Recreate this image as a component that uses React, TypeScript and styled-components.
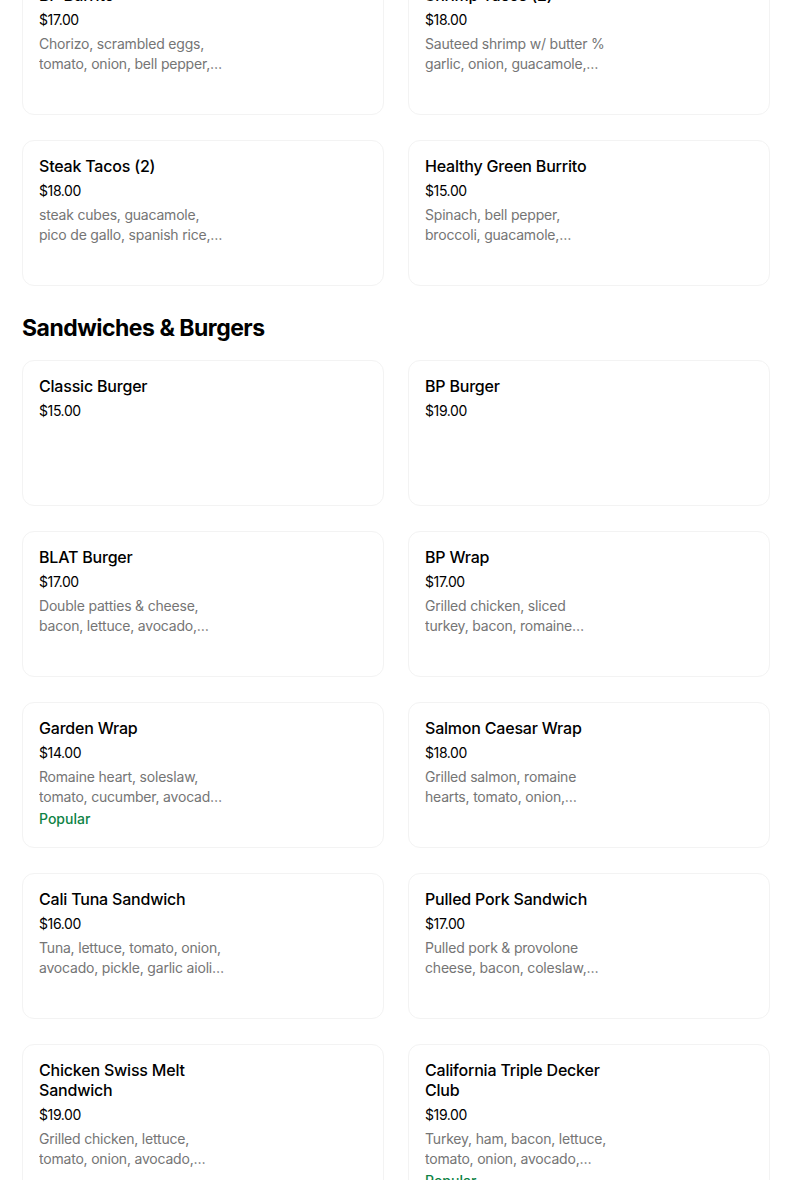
import styled, { createGlobalStyle } from 'styled-components'

const GlobalStyle = createGlobalStyle`
  html, body {
    margin: 0;
    padding: 0;
    background: #ffffff;
    overflow: hidden;
  }
  body {
    font-family: Inter, 'Liberation Sans', Arial, sans-serif;
    color: #000000;
  }
`

type Item = {
  name: string
  price: string
  desc?: string
  popular?: boolean
}

const tacos: Item[] = [
  { name: 'BP Burrito', price: '$17.00', desc: 'Chorizo, scrambled eggs, tomato, onion, bell pepper, cheese, potatoes' },
  { name: 'Shrimp Tacos (2)', price: '$18.00', desc: 'Sauteed shrimp w/ butter % garlic, onion, guacamole, pico de gallo' },
  { name: 'Steak Tacos (2)', price: '$18.00', desc: 'steak cubes, guacamole, pico de gallo, spanish rice, beans' },
  { name: 'Healthy Green Burrito', price: '$15.00', desc: 'Spinach, bell pepper, broccoli, guacamole, mushrooms, brown rice' },
]

const sandwiches: Item[] = [
  { name: 'Classic Burger', price: '$15.00' },
  { name: 'BP Burger', price: '$19.00' },
  { name: 'BLAT Burger', price: '$17.00', desc: 'Double patties & cheese, bacon, lettuce, avocado, tomato' },
  { name: 'BP Wrap', price: '$17.00', desc: 'Grilled chicken, sliced turkey, bacon, romaine lettuce, tomato' },
  { name: 'Garden Wrap', price: '$14.00', desc: 'Romaine heart, soleslaw, tomato, cucumber, avocado, hummus', popular: true },
  { name: 'Salmon Caesar Wrap', price: '$18.00', desc: 'Grilled salmon, romaine hearts, tomato, onion, caesar dressing' },
  { name: 'Cali Tuna Sandwich', price: '$16.00', desc: 'Tuna, lettuce, tomato, onion, avocado, pickle, garlic aioli sauce' },
  { name: 'Pulled Pork Sandwich', price: '$17.00', desc: 'Pulled pork & provolone cheese, bacon, coleslaw, bbq sauce' },
  { name: 'Chicken Swiss Melt Sandwich', price: '$19.00', desc: 'Grilled chicken, lettuce, tomato, onion, avocado, swiss cheese' },
  { name: 'California Triple Decker Club', price: '$19.00', desc: 'Turkey, ham, bacon, lettuce, tomato, onion, avocado, mayo, sourdough', popular: true },
]

const MenuCard = ({ item }: { item: Item }) => (
  <Card>
    <Info>
      <Title>{item.name}</Title>
      <Price>{item.price}</Price>
      {item.desc && <Desc>{item.desc}</Desc>}
      {item.popular && <Popular>Popular</Popular>}
    </Info>
  </Card>
)

const App = () => {
  return (
    <>
      <GlobalStyle />
      <Page>
        <Grid>
          {tacos.map((item) => <MenuCard key={item.name} item={item} />)}
        </Grid>
        <Section>
          <Heading>Sandwiches &amp; Burgers</Heading>
          <Grid>
            {sandwiches.map((item) => <MenuCard key={item.name} item={item} />)}
          </Grid>
        </Section>
      </Page>
    </>
  )
}

export default App

const Page = styled.main`
  width: 804px;
  box-sizing: border-box;
  padding: 0 34px 40px 22px;
  margin-top: -31px;
`

const Section = styled.section`
  margin-top: 24px;
`

const Heading = styled.h2`
  margin: 0 0 14px;
  font-size: 23px;
  line-height: 36px;
  font-weight: 700;
  letter-spacing: -0.5px;
  color: #000000;
`

const Grid = styled.div`
  display: grid;
  grid-template-columns: 362px 362px;
  column-gap: 24px;
  row-gap: 25px;
`

const Card = styled.div`
  box-sizing: border-box;
  min-height: 146px;
  border: 1px solid #f3f3f3;
  border-radius: 12px;
  background: #ffffff;
  padding: 15px 16px 16px;
  display: flex;
`

const Info = styled.div`
  width: 186px;
  display: flex;
  flex-direction: column;
`

const Title = styled.div`
  font-size: 16px;
  line-height: 20px;
  font-weight: 500;
  letter-spacing: -0.2px;
  color: #000000;
`

const Price = styled.div`
  margin-top: 5px;
  font-size: 14px;
  line-height: 20px;
  letter-spacing: -0.4px;
  color: #000000;
`

const Desc = styled.div`
  margin-top: 4px;
  font-size: 14px;
  line-height: 20px;
  letter-spacing: -0.2px;
  color: #757575;
  display: -webkit-box;
  -webkit-line-clamp: 2;
  -webkit-box-orient: vertical;
  overflow: hidden;
`

const Popular = styled.div`
  margin-top: 2px;
  font-size: 14px;
  line-height: 20px;
  font-weight: 500;
  color: #0e8345;
`
